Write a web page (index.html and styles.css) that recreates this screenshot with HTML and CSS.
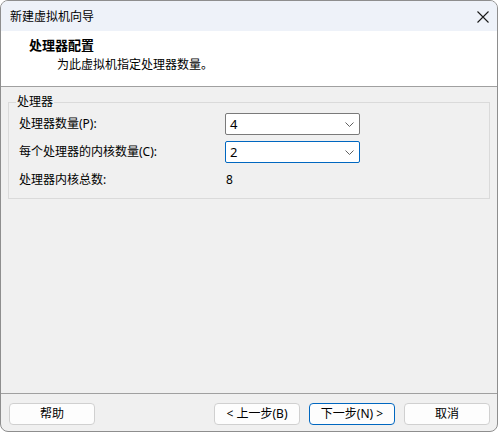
FILE: index.html
```html
<!DOCTYPE html>
<html lang="zh-CN">
<head>
    <meta charset="UTF-8">
    <meta name="viewport" content="width=device-width, initial-scale=1.0">
    <title>新建虚拟机向导</title>
    <link rel="stylesheet" href="styles.css">
</head>
<body>

    <div class="window">
        <div class="titlebar">
            <span class="title">新建虚拟机向导</span>
            <svg class="close" width="12" height="12" viewBox="0 0 12 12">
                <path d="M0.5 0.5 L11.5 11.5 M11.5 0.5 L0.5 11.5" stroke="#1a1a1a" stroke-width="1.1" fill="none"/>
            </svg>
        </div>

        <div class="header">
            <div class="header-title">处理器配置</div>
            <div class="header-desc">为此虚拟机指定处理器数量。</div>
        </div>

        <div class="content">
            <fieldset class="group">
                <legend>处理器</legend>
                <div class="rows">
                    <div class="label">处理器数量(P):</div>
                    <div class="combo">
                        <span>4</span>
                        <svg width="9" height="5" viewBox="0 0 9 5"><path d="M0.5 0.5 L4.5 4.5 L8.5 0.5" stroke="#606060" stroke-width="1" fill="none"/></svg>
                    </div>

                    <div class="label">每个处理器的内核数量(C):</div>
                    <div class="combo focused">
                        <span>2</span>
                        <svg width="9" height="5" viewBox="0 0 9 5"><path d="M0.5 0.5 L4.5 4.5 L8.5 0.5" stroke="#606060" stroke-width="1" fill="none"/></svg>
                    </div>

                    <div class="label">处理器内核总数:</div>
                    <div class="value">8</div>
                </div>
            </fieldset>
        </div>

        <div class="footer">
            <button class="button">帮助</button>
            <div class="spacer"></div>
            <button class="button">&lt; 上一步(B)</button>
            <button class="button default">下一步(N) &gt;</button>
            <button class="button">取消</button>
        </div>
    </div>

</body>
</html>
```

FILE: styles.css
```css
body {
    margin: 0;
    background: #ffffff;
    font-family: "Noto Sans", "Noto Sans CJK SC", sans-serif;
    font-size: 12px;
    color: #000;
}

.window {
    box-sizing: border-box;
    width: 498px;
    height: 432px;
    border: 1px solid #8e8e8e;
    border-radius: 8px;
    overflow: hidden;
    display: flex;
    flex-direction: column;
    background: #f0f0f0;
}

.titlebar {
    height: 30px;
    flex: none;
    display: flex;
    align-items: center;
    justify-content: space-between;
    padding: 0 8px 0 9px;
    background: #eef2f9;
}

.title {
    line-height: 16px;
    padding-top: 1px;
}

.close {
    margin-top: 1px;
}

.header {
    height: 56px;
    flex: none;
    box-sizing: border-box;
    padding: 5px 0 0 28px;
    background: #fff;
    border-bottom: 1px solid #a0a0a0;
}

.header-title {
    font-size: 13px;
    font-weight: bold;
    line-height: 19px;
}

.header-desc {
    line-height: 19px;
    padding-left: 28px;
}

.content {
    flex: 1;
    padding: 7px 7px 0;
}

.group {
    margin: 0;
    padding: 3px 10px 7px 10px;
    border: 1px solid #dadada;
}

.group legend {
    padding: 0 1px;
    margin-left: -3px;
    line-height: 16px;
}

.rows {
    display: grid;
    grid-template-columns: 206px 135px;
    grid-auto-rows: 22px;
    row-gap: 6px;
    align-items: center;
}

.label,
.value {
    line-height: 16px;
}

.value {
    padding-left: 1px;
}

.combo {
    box-sizing: border-box;
    height: 22px;
    display: flex;
    align-items: center;
    justify-content: space-between;
    padding: 0 5px 0 4px;
    background: #fff;
    border: 1px solid #7a7a7a;
    border-radius: 2px;
    font-size: 13px;
}

.combo.focused {
    border-color: #0067c0;
}

.footer {
    height: 38px;
    flex: none;
    box-sizing: border-box;
    display: flex;
    gap: 9px;
    padding: 9px 7px 0 8px;
    border-top: 1px solid #a0a0a0;
}

.spacer {
    flex: 1;
}

.button {
    box-sizing: border-box;
    width: 86px;
    height: 22px;
    padding: 0;
    background: #fdfdfd;
    border: 1px solid #d0d0d0;
    border-radius: 4px;
    font-family: "Noto Sans", "Noto Sans CJK SC", sans-serif;
    font-size: 12px;
    color: #000;
    line-height: 16px;
}

.button.default {
    border-color: #0067c0;
}
```
